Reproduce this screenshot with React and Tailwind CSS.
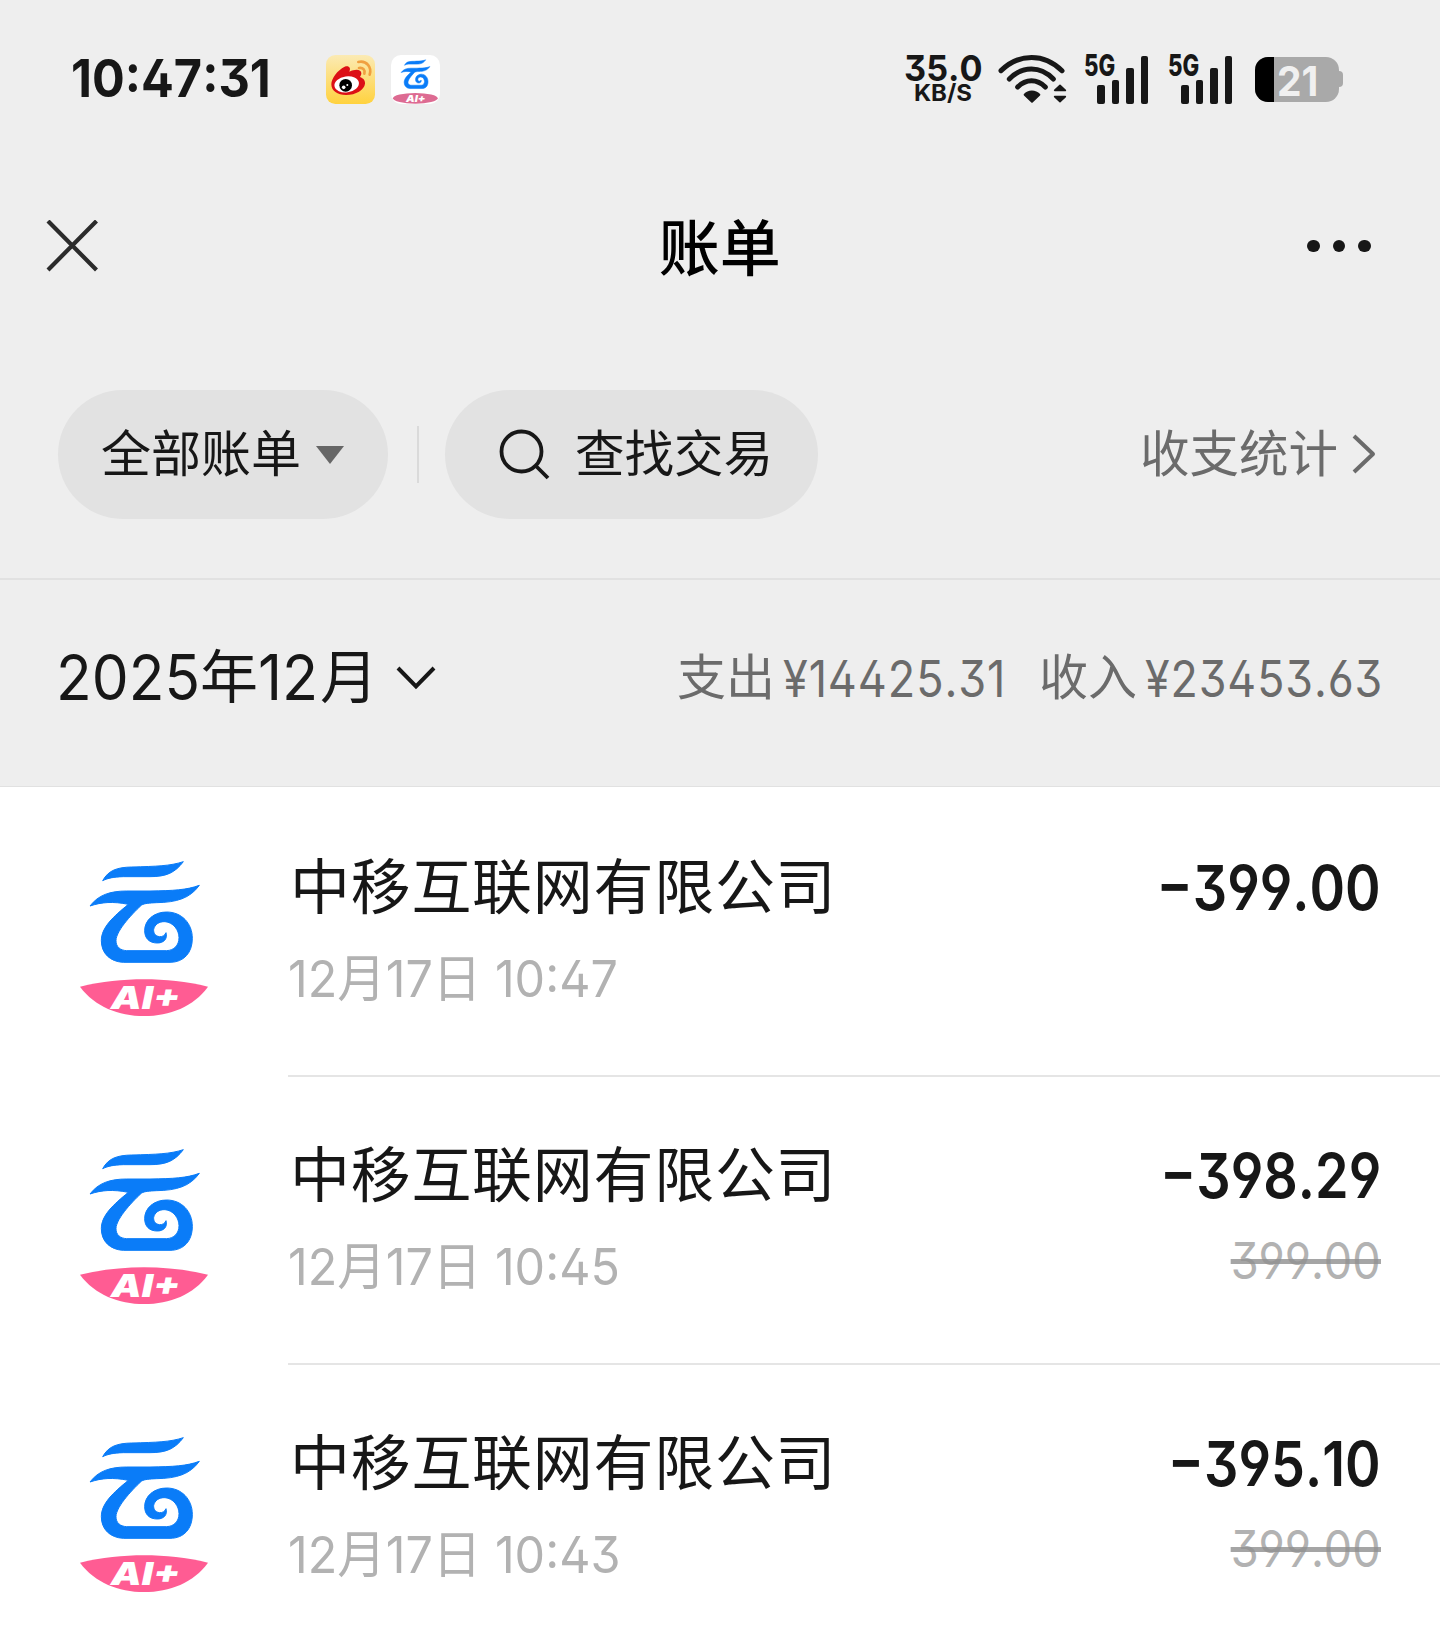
import clsx from 'clsx';

const bills = [
  { id: 1, name: '中移互联网有限公司', time: '12月17日 10:47', amount: '399.00' },
  { id: 2, name: '中移互联网有限公司', time: '12月17日 10:45', amount: '398.29', original: '399.00' },
  { id: 3, name: '中移互联网有限公司', time: '12月17日 10:43', amount: '395.10', original: '399.00' },
];

// Figures are slightly condensed, with open 4/6/9 and a flat-topped 3
function Num({ children, className }) {
  return (
    <span
      className={clsx(
        "inline-block whitespace-nowrap [font-feature-settings:'cv02','cv03','cv04','cv09','kern'_0]",
        className
      )}
    >
      {children}
    </span>
  );
}

function CloudMark() {
  return (
    <g fill="#0a7cf8">
      <path d="M128 122C146 90 172 82 215 81C290 79 330 78 370 65C345 98 320 110 270 110L190 110C160 111 145 114 128 122Z" />
      <path d="M90 198C115 165 150 153 200 153L270 153C340 152 380 150 418 136C390 175 350 187 290 188C268 189 254 190 245 195C225 213 168 270 168 302C168 320 180 331 200 332L320 332C342 331 357 316 357 293C357 270 340 247 315 245C297 244 284 254 281 268C280 280 286 288 298 290C308 291 314 286 318 278C323 296 312 309 292 309C268 309 254 295 254 272C254 240 282 216 320 216C365 216 397 250 397 295C397 338 372 367 330 367L190 367C150 365 124 340 124 302C124 262 160 230 205 193C160 184 125 186 90 198Z" />
    </g>
  );
}

function CloudLogo() {
  return (
    <svg className="h-[190px] w-[170px] shrink-0" viewBox="0 0 510 570">
      <g stroke="#0a7cf8" strokeWidth="3">
        <CloudMark />
      </g>
      <path
        d="M60 440C125 425 190 418 252 418C315 418 380 425 444 440C400 500 330 528 252 528C175 528 105 500 60 440Z"
        fill="#ff5c93"
      />
      <text x="152" y="508" textLength="208" lengthAdjust="spacingAndGlyphs" fill="#fff" fontFamily="Inter, sans-serif" fontSize="92" fontWeight="900" fontStyle="italic">
        AI+
      </text>
    </svg>
  );
}

function CloudAppIcon() {
  return (
    <svg className="ml-4 size-[49px]" viewBox="0 0 147 147">
      <rect width="147" height="147" rx="30" fill="#fff" />
      <g transform="translate(7 -4) scale(.262 .285)" stroke="#0a7cf8" strokeWidth="6">
        <CloudMark />
      </g>
      <ellipse cx="73" cy="130" rx="67" ry="16" fill="#dd6b92" />
      <text x="45" y="140" textLength="58" lengthAdjust="spacingAndGlyphs" fill="#fff" fontFamily="Inter, sans-serif" fontSize="28" fontWeight="900" fontStyle="italic">
        AI+
      </text>
    </svg>
  );
}

function WeiboIcon() {
  return (
    <svg className="size-[49px]" viewBox="0 0 147 147">
      <defs>
        <linearGradient id="weibo" x1="0" y1="0" x2="0" y2="1">
          <stop offset="0" stopColor="#fbeab4" />
          <stop offset="1" stopColor="#ffd23e" />
        </linearGradient>
      </defs>
      <rect width="147" height="147" rx="28" fill="url(#weibo)" />
      <path
        d="M16 88C16 70 34 46 56 35C68 30 76 38 70 50C88 41 106 42 106 55C106 60 104 62 102 66C112 70 118 76 117 86C115 104 90 120 60 120C34 120 16 108 16 88Z"
        fill="#dc1016"
      />
      <ellipse cx="62" cy="88" rx="37" ry="24" fill="#fff" transform="rotate(-8 62 88)" />
      <circle cx="59" cy="91" r="19" fill="#000" />
      <circle cx="53" cy="97" r="5.5" fill="#fff" />
      <circle cx="64" cy="90" r="3" fill="#fff" />
      <g fill="none" stroke="#f0a040" strokeWidth="8" strokeLinecap="round">
        <path d="M97 21C122 16 138 36 131 59" />
        <path d="M99 39C111 37 118 45 115 56" />
      </g>
    </svg>
  );
}

function WifiIcon() {
  return (
    <svg className="ml-4 h-[51px] w-[70px]" viewBox="0 0 210 153" fill="none" stroke="#171717" strokeWidth="15" strokeLinecap="round">
      <path d="M9 50C64 -3 138 -3 192 50" />
      <path d="M34 75C74 35 127 35 166 75" />
      <path d="M59 99C84 74 117 74 142 99" />
      <path d="M80 122C91 109 112 109 124 122L102 143Z" fill="#171717" strokeWidth="6" strokeLinejoin="round" />
      <path d="M186 94L202 109L170 109Z M170 128L202 128L186 143Z" fill="#171717" strokeWidth="5" strokeLinejoin="round" />
    </svg>
  );
}

function Signal({ className }) {
  return (
    <div className={clsx('relative h-[49px] w-[64px]', className)}>
      <span className="absolute -top-[5px] left-0 origin-left scale-x-[.74] text-[30px] leading-[31px] font-extrabold">5G</span>
      <div className="flex h-full items-end justify-end gap-[7px]">
        <i className="h-[19px] w-[7.5px] rounded-[2px] bg-[#171717]" />
        <i className="h-[24px] w-[7.5px] rounded-[2px] bg-[#171717]" />
        <i className="h-[36px] w-[7.5px] rounded-[2px] bg-[#171717]" />
        <i className="h-[48px] w-[7.5px] rounded-[2px] bg-[#171717]" />
      </div>
    </div>
  );
}

function StatusBar() {
  return (
    <div className="flex h-[158px] items-center pl-[71px]">
      <Num className="w-[255px] origin-left scale-x-[.935] text-[52px] leading-none font-bold">10:47:31</Num>
      <WeiboIcon />
      <CloudAppIcon />
      <div className="ml-auto flex items-center pr-[97px]">
        <div className="flex w-[78px] flex-col items-center font-bold">
          <Num className="scale-x-[.95] text-[36px] leading-[28px]">35.0</Num>
          <span className="scale-x-[1.04] text-[23px] leading-[22px]">KB/S</span>
        </div>
        <WifiIcon />
        <Signal className="ml-4" />
        <Signal className="ml-5" />
        <div className="ml-[23px] flex items-center">
          <div className="flex h-[45px] w-[84px] items-center rounded-[13px] bg-[#a9a9a9]">
            <div className="h-full w-[19px] rounded-l-[13px] bg-black" />
            <Num className="mt-1 ml-[3px] origin-left scale-x-[.95] text-[41px] leading-none font-bold text-[#f0f0f0]">21</Num>
          </div>
          <div className="h-4 w-1 rounded-r-[4px] bg-[#a9a9a9]" />
        </div>
      </div>
    </div>
  );
}

function NavBar() {
  return (
    <div className="flex h-[176px] items-center justify-between pr-[69px] pl-[46px]">
      <svg className="h-[53px] w-[53px]" viewBox="0 0 53 53" stroke="#2b2b2b" strokeWidth="4.2">
        <path d="M2 1L50.5 50M50.5 1L2 50" />
      </svg>
      <h1 className="mt-[7px] ml-[33px] text-[61px] leading-none font-medium text-black">账单</h1>
      <div className="flex gap-[13px]">
        <i className="size-[12.5px] rounded-full bg-[#171717]" />
        <i className="size-[12.5px] rounded-full bg-[#171717]" />
        <i className="size-[12.5px] rounded-full bg-[#171717]" />
      </div>
    </div>
  );
}

function FilterBar() {
  return (
    <div className="flex h-[246px] items-start border-b-2 border-[#e1e1e1] pt-14 pl-[58px] text-[49.5px] leading-none">
      <button className="flex h-[129px] w-[330px] items-center rounded-full bg-[#e2e2e2] pl-[43px]">
        <span className="-mt-[2px] text-[50px]">全部账单</span>
        <svg className="ml-[15px] h-[18px] w-[28px]" viewBox="0 0 28 18">
          <path d="M0 0H28L14 18Z" fill="#666" />
        </svg>
      </button>
      <div className="mt-9 ml-[29px] h-[57px] w-[2px] bg-[#dadada]" />
      <button className="ml-[26px] flex h-[129px] w-[373px] items-center rounded-full bg-[#e2e2e2] pl-[53px]">
        <svg className="h-[52px] w-[52px]" viewBox="0 0 52 52" fill="none" stroke="#171717" strokeWidth="3.8">
          <circle cx="23.5" cy="22.5" r="20" />
          <path d="M37.5 36.5L50 49" />
        </svg>
        <span className="ml-[25px]">查找交易</span>
      </button>
      <div className="ml-auto flex h-[129px] items-center pr-[63px] text-[#6b6b6b]">
        <span>收支统计</span>
        <svg className="mt-[-2px] ml-[14px] h-[40px] w-[25px]" viewBox="0 0 25 40" fill="none" stroke="#6b6b6b" strokeWidth="4" strokeLinejoin="round">
          <path d="M2 2L21 20L2 38" />
        </svg>
      </div>
    </div>
  );
}

function MonthSummary() {
  return (
    <div className="flex h-[207px] items-center border-b border-[#e1e1e1] pr-[59px] pb-3 pl-[56px]">
      <div className="flex items-baseline text-[58px] leading-none">
        <Num className="w-[144px] origin-left scale-x-[.93] text-[63px]">2025</Num>
        <span className="-translate-y-[2px]">年</span>
        <Num className="w-[62px] origin-left scale-x-[.94] text-[63px]">12</Num>
        <span className="-translate-y-[2px]">月</span>
      </div>
      <svg className="ml-[17px] h-[26px] w-[42px]" viewBox="0 0 42 26" fill="none" stroke="#171717" strokeWidth="4">
        <path d="M3 4L21 22.5L39 4" />
      </svg>
      <div className="ml-auto flex items-baseline text-[49px] leading-none text-[#6b6b6b]">
        <span>支出</span>
        <Num className="ml-2 w-[256px] origin-left translate-y-[2px] scale-x-[.9] text-[50px] tracking-[1px]">¥14425.31</Num>
        <span>收入</span>
        <Num className="ml-2 w-[236px] origin-left translate-y-[2px] scale-x-[.895] text-[50px] tracking-[1px]">¥23453.63</Num>
      </div>
    </div>
  );
}

function BillRow({ bill, last }) {
  return (
    <li className="flex h-[288px] pl-[60px]">
      <div className="mt-[51px] w-[228px] shrink-0">
        <CloudLogo />
      </div>
      <div className={clsx('flex flex-1 justify-between pr-[59px]', !last && 'border-b-2 border-[#e5e5e5]')}>
        <div className="pt-[65px]">
          <div className="pl-[2px] text-[60px] leading-[66px] tracking-[.7px]">{bill.name}</div>
          <Num className="mt-[29px] origin-left scale-x-[.95] text-[51px] leading-[60px] text-[#b2b2b2]">
            {bill.time}
          </Num>
        </div>
        <div className="flex flex-col items-end pt-[67px]">
          <Num className="origin-right scale-x-[.87] text-[62px] leading-[64px] font-semibold">
            −{bill.amount}
          </Num>
          {bill.original && (
            <Num className="relative mt-[23px] origin-right scale-x-[.9] text-[50px] leading-[60px] text-[#b2b2b2]">
              {bill.original}
              <i className="absolute inset-x-0 top-[28px] h-[5px] bg-[#8f8f8f]/80" />
            </Num>
          )}
        </div>
      </div>
    </li>
  );
}

export default function App() {
  return (
    <div className="h-[1651px] w-[1440px] overflow-hidden bg-white font-['Inter','Noto_Sans_CJK_SC',sans-serif] text-[#171717]">
      <div className="bg-[#eeeeee]">
        <StatusBar />
        <NavBar />
        <FilterBar />
        <MonthSummary />
      </div>
      <ul className="pt-[2px]">
        {bills.map((bill, index) => (
          <BillRow key={bill.id} bill={bill} last={index === bills.length - 1} />
        ))}
      </ul>
    </div>
  );
}
